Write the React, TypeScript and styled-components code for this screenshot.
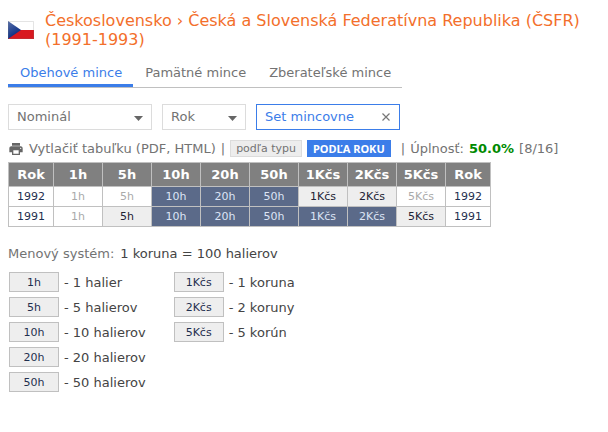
import React from "react";
import styled, { createGlobalStyle } from "styled-components";

const GlobalStyle = createGlobalStyle`
  *, *::before, *::after { box-sizing: border-box; }
  body {
    margin: 0;
    background: #fff;
    color: #737373;
    font: 13px/17px Verdana, "DejaVu Sans", sans-serif;
  }
  button, select { font: inherit; color: inherit; }
  a { color: inherit; text-decoration: none; }
`;

const Page = styled.main`
  padding: 11px 8px 0;
`;

const Header = styled.header`
  display: flex;
  align-items: center;
  gap: 11px;
`;

const Flag = styled.svg`
  flex: none;
  width: 26px;
  height: 18px;
`;

const Title = styled.h1`
  margin: 0;
  font-size: 16px;
  line-height: 19px;
  font-weight: 400;
  color: #f36f2b;
`;

const Tabs = styled.nav`
  display: flex;
  width: fit-content;
  margin-top: 10px;
  border-bottom: 1px solid #c0c0c0;
`;

const Tab = styled.a<{ $active?: boolean }>`
  padding: 5px 11px 3px 12px;
  border-bottom: 3px solid ${(p) => (p.$active ? "#3b7de9" : "transparent")};
  color: ${(p) => (p.$active ? "#3b7de9" : "#737373")};
  white-space: nowrap;
`;

const Filters = styled.div`
  display: flex;
  gap: 10px;
  margin-top: 16px;
`;

const SelectBox = styled.div<{ $width: number }>`
  position: relative;
  width: ${(p) => p.$width}px;
  height: 26px;
`;

const Select = styled.select`
  appearance: none;
  width: 100%;
  height: 100%;
  padding: 0 20px 1px 8px;
  border: 1px solid #dcdcdc;
  border-radius: 0;
  background: #fff;
`;

const Caret = styled.svg`
  position: absolute;
  top: 12px;
  right: 9px;
  width: 9px;
  height: 5px;
  pointer-events: none;
`;

const ActiveFilter = styled.button`
  display: flex;
  align-items: center;
  justify-content: space-between;
  width: 144px;
  height: 26px;
  padding: 0 9px 1px 8px;
  border: 1px solid #3b7de9;
  background: #fff;
  color: #3b7de9;
`;

const Cross = styled.svg`
  width: 8px;
  height: 8px;
`;

const Toolbar = styled.div`
  display: flex;
  align-items: center;
  gap: 5px;
  height: 17px;
  margin: 10px 0 5px;
  white-space: nowrap;
`;

const PrintLink = styled.a`
  display: flex;
  align-items: center;
  gap: 5px;
`;

const PrintIcon = styled.svg`
  width: 16px;
  height: 16px;
`;

const Modes = styled.div`
  display: flex;
  gap: 5px;
  margin-right: 5px;
`;

const Mode = styled.button<{ $active?: boolean }>`
  height: 17px;
  padding: 0 5px;
  border: 1px solid ${(p) => (p.$active ? "#3b7de9" : "#dcdcdc")};
  background: ${(p) => (p.$active ? "#3b7de9" : "#ededed")};
  color: ${(p) => (p.$active ? "#fff" : "#737373")};
  font-size: 11px;
  line-height: 15px;
  font-weight: ${(p) => (p.$active ? 700 : 400)};
  font-family: ${(p) => (p.$active ? 'Verdana, "Noto Sans", sans-serif' : "inherit")};
`;

const Percent = styled.strong`
  color: #008a00;
`;

const CoinTable = styled.table`
  table-layout: fixed;
  width: 483px;
  border-collapse: collapse;
  text-align: center;

  th, td { padding: 0; border: 1px solid #c0c0c0; }
`;

const YearCol = styled.col`
  width: 45px;
`;

const HeadCell = styled.th`
  height: 24px;
  background: #808080;
  color: #fff;
`;

type State = "none" | "issued" | "set" | "year";

const cellColors: Record<State, [string, string]> = {
  none: ["#fff", "#aaa"],
  issued: ["#eee", "#222233"],
  set: ["#5b6a89", "#dce4f5"],
  year: ["#fff", "#1f2f4f"],
};

const Cell = styled.td<{ $state: State }>`
  height: 20px;
  background: ${(p) => cellColors[p.$state][0]};
  color: ${(p) => cellColors[p.$state][1]};
  font-size: 11px;
  line-height: 17px;
`;

const System = styled.p`
  display: flex;
  gap: 6px;
  margin: 18px 0 10px;
`;

const Dark = styled.span`
  color: #444;
`;

const Legend = styled.div`
  display: flex;
  gap: 28px;
  padding-left: 1px;
  color: #444;
`;

const LegendList = styled.ul`
  display: flex;
  flex-direction: column;
  gap: 5px;
  margin: 0;
  padding: 0;
  list-style: none;
`;

const LegendItem = styled.li`
  display: flex;
  align-items: center;
  gap: 5px;
  height: 20px;
  white-space: nowrap;
`;

const Coin = styled.a`
  width: 50px;
  height: 20px;
  border: 1px solid #c0c0c0;
  background: #eee;
  color: #1f2f4f;
  font-size: 11px;
  line-height: 19px;
  text-align: center;
`;

const coins = ["1h", "5h", "10h", "20h", "50h", "1Kčs", "2Kčs", "5Kčs"];

const years: { year: number; states: State[] }[] = [
  { year: 1992, states: ["none", "none", "set", "set", "set", "issued", "issued", "none"] },
  { year: 1991, states: ["none", "issued", "set", "set", "set", "set", "set", "issued"] },
];

const legend = [
  [["1h", "1 halier"], ["5h", "5 halierov"], ["10h", "10 halierov"], ["20h", "20 halierov"], ["50h", "50 halierov"]],
  [["1Kčs", "1 koruna"], ["2Kčs", "2 koruny"], ["5Kčs", "5 korún"]],
];

function Dropdown({ label, width }: { label: string; width: number }) {
  return (
    <SelectBox $width={width}>
      <Select aria-label={label}>
        <option>{label}</option>
      </Select>
      <Caret viewBox="0 0 9 5" aria-hidden="true">
        <path d="M0 0h9L4.5 5z" fill="#666" />
      </Caret>
    </SelectBox>
  );
}

export default function App() {
  return (
    <>
      <GlobalStyle />
      <Page>
        <Header>
          <Flag viewBox="0 0 26 18" aria-hidden="true">
            <defs>
              <linearGradient id="shine" x1="0" y1="0" x2="1" y2="1">
                <stop offset="0" stopColor="#fff" stopOpacity="0.3" />
                <stop offset="0.5" stopColor="#fff" stopOpacity="0" />
              </linearGradient>
            </defs>
            <path d="M0 0h26v18H0z" fill="#fff" />
            <path d="M0 9h26v9H0z" fill="#d81920" />
            <path d="M0 0l13 9L0 18z" fill="#123487" />
            <path d="M0 0h26v18H0z" fill="url(#shine)" />
            <path d="M.5.5h25v17H.5z" fill="none" stroke="#777" strokeOpacity=".2" />
          </Flag>
          <Title>Československo › Česká a Slovenská Federatívna Republika (ČSFR) (1991-1993)</Title>
        </Header>

        <Tabs>
          <Tab href="#obehove" $active>Obehové mince</Tab>
          <Tab href="#pamatne">Pamätné mince</Tab>
          <Tab href="#zberatelske">Zberateľské mince</Tab>
        </Tabs>

        <Filters>
          <Dropdown label="Nominál" width={144} />
          <Dropdown label="Rok" width={84} />
          <ActiveFilter type="button">
            Set mincovne
            <Cross viewBox="0 0 8 8" aria-hidden="true">
              <path d="M.5.5l7 7M7.5.5l-7 7" stroke="#777" strokeWidth="1.2" />
            </Cross>
          </ActiveFilter>
        </Filters>

        <Toolbar>
          <PrintLink href="#print">
            <PrintIcon viewBox="0 0 24 24" aria-hidden="true">
              <path
                fill="#666"
                d="M19 8H5c-1.66 0-3 1.34-3 3v6h4v4h12v-4h4v-6c0-1.66-1.34-3-3-3zm-3 11H8v-5h8v5zm3-7c-.55 0-1-.45-1-1s.45-1 1-1 1 .45 1 1-.45 1-1 1zm-1-9H6v4h12V3z"
              />
            </PrintIcon>
            Vytlačiť tabuľku (PDF, HTML)
          </PrintLink>
          <span>|</span>
          <Modes>
            <Mode type="button">podľa typu</Mode>
            <Mode type="button" $active>PODĽA ROKU</Mode>
          </Modes>
          <span>|</span>
          <span>Úplnosť:</span>
          <Percent>50.0%</Percent>
          <span>[8/16]</span>
        </Toolbar>

        <CoinTable>
          <colgroup>
            <YearCol />
            {coins.map((c) => <col key={c} />)}
            <YearCol />
          </colgroup>
          <thead>
            <tr>
              <HeadCell>Rok</HeadCell>
              {coins.map((c) => <HeadCell key={c}>{c}</HeadCell>)}
              <HeadCell>Rok</HeadCell>
            </tr>
          </thead>
          <tbody>
            {years.map(({ year, states }) => (
              <tr key={year}>
                <Cell $state="year">{year}</Cell>
                {states.map((s, i) => <Cell key={coins[i]} $state={s}>{coins[i]}</Cell>)}
                <Cell $state="year">{year}</Cell>
              </tr>
            ))}
          </tbody>
        </CoinTable>

        <System>
          <span>Menový systém:</span>
          <Dark>1 koruna = 100 halierov</Dark>
        </System>

        <Legend>
          {legend.map((list, i) => (
            <LegendList key={i}>
              {list.map(([coin, name]) => (
                <LegendItem key={coin}>
                  <Coin href={`#${coin}`}>{coin}</Coin>
                  <span>- {name}</span>
                </LegendItem>
              ))}
            </LegendList>
          ))}
        </Legend>
      </Page>
    </>
  );
}
